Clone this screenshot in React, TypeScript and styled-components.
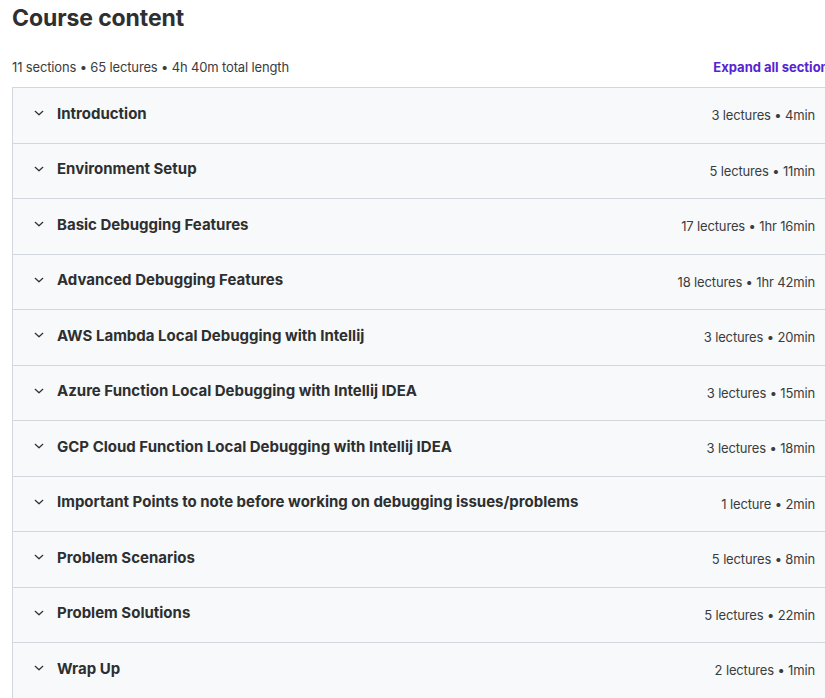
import React from 'react'
import styled, { createGlobalStyle } from 'styled-components'

const GlobalStyle = createGlobalStyle`
  html, body {
    margin: 0;
    padding: 0;
    overflow: hidden;
    background: #fff;
  }
  body {
    font-family: Inter, "Noto Sans", sans-serif;
    color: #2d2f31;
  }
`

interface Section {
  title: string
  lectures: number
  length: string
}

const sections: Section[] = [
  { title: 'Introduction', lectures: 3, length: '4min' },
  { title: 'Environment Setup', lectures: 5, length: '11min' },
  { title: 'Basic Debugging Features', lectures: 17, length: '1hr 16min' },
  { title: 'Advanced Debugging Features', lectures: 18, length: '1hr 42min' },
  { title: 'AWS Lambda Local Debugging with Intellij', lectures: 3, length: '20min' },
  { title: 'Azure Function Local Debugging with Intellij IDEA', lectures: 3, length: '15min' },
  { title: 'GCP Cloud Function Local Debugging with Intellij IDEA', lectures: 3, length: '18min' },
  { title: 'Important Points to note before working on debugging issues/problems', lectures: 1, length: '2min' },
  { title: 'Problem Scenarios', lectures: 5, length: '8min' },
  { title: 'Problem Solutions', lectures: 5, length: '22min' },
  { title: 'Wrap Up', lectures: 2, length: '1min' },
]

const Chevron = () => (
  <svg width="10" height="10" viewBox="0 0 10 10" fill="none">
    <path d="M1.2 3.3 L5 6.8 L8.8 3.3" stroke="#2d2f31" strokeWidth="1.2" strokeLinecap="round" strokeLinejoin="round" />
  </svg>
)

export const App: React.FC = () => {
  return <Page>
    <GlobalStyle />
    <Title>Course content</Title>
    <Header>
      <Summary>11 sections • 65 lectures • 4h 40m total length</Summary>
      <ExpandLink>Expand all sections</ExpandLink>
    </Header>
    <Panel>
      {sections.map(s => (
        <Row key={s.title}>
          <RowTitle>
            <ChevronBox><Chevron /></ChevronBox>
            <span>{s.title}</span>
          </RowTitle>
          <RowMeta>
            {s.lectures} {s.lectures === 1 ? 'lecture' : 'lectures'} • {s.length}
          </RowMeta>
        </Row>
      ))}
    </Panel>
  </Page>
}

const Page = styled.div`
  width: 824px;
  padding: 0 0 0 12px;
`

const Title = styled.h2`
  margin: 0;
  padding-top: 4px;
  font-size: 23px;
  font-weight: 700;
  line-height: 28px;
  letter-spacing: -0.1px;
`

const Header = styled.div`
  display: flex;
  justify-content: space-between;
  align-items: center;
  margin-top: 26px;
  margin-bottom: 11px;
`

const Summary = styled.div`
  font-size: 13px;
  color: #3a3c3e;
  line-height: 18px;
  letter-spacing: -0.15px;
`

const ExpandLink = styled.button`
  background: none;
  border: none;
  padding: 0;
  font-family: inherit;
  font-size: 13px;
  font-weight: 700;
  color: #5624d0;
  cursor: pointer;
  white-space: nowrap;
`

const Panel = styled.div`
  border: 1px solid #d1d7dc;
`

const Row = styled.div`
  display: flex;
  align-items: center;
  justify-content: space-between;
  height: 54.5px;
  padding: 0 20px 0 21px;
  background: #f7f9fa;
  & + & {
    border-top: 1px solid #d1d7dc;
  }
`

const RowTitle = styled.div`
  display: flex;
  align-items: center;
  font-size: 15px;
  font-weight: 700;
  margin-top: -4px;
`

const ChevronBox = styled.span`
  display: inline-flex;
  width: 10px;
  margin-right: 13px;
`

const RowMeta = styled.div`
  font-size: 13px;
  color: #3a3c3e;
  white-space: nowrap;
  letter-spacing: -0.15px;
`

export default App
